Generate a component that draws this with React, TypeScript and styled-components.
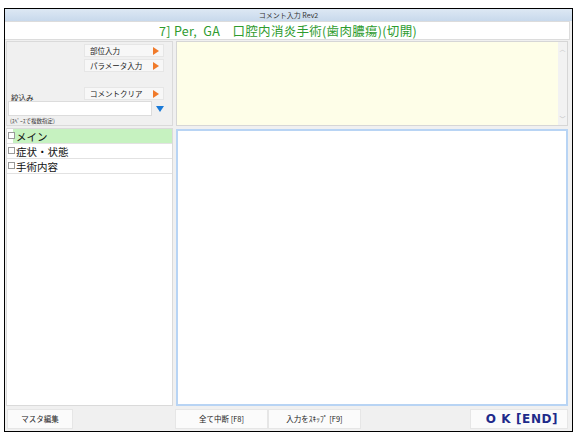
import React from 'react'
import styled, { createGlobalStyle } from 'styled-components'

const Global = createGlobalStyle`
	html, body {
		margin: 0;
		padding: 0;
		background: #ffffff;
		font-family: 'Noto Sans CJK JP', 'Noto Sans', sans-serif;
	}
`

const Page = styled.div`
	width: 578px;
	height: 437px;
	padding: 8px 5px 5px 4px;
	box-sizing: border-box;
`

const Frame = styled.div`
	width: 569px;
	height: 424px;
	box-sizing: border-box;
	border: 1px solid #000;
	background: #f0f0f0;
	display: flex;
	flex-direction: column;
`

const TitleBar = styled.div`
	height: 12px;
	background: linear-gradient(#dde8f4, #c8d9ec);
	font-size: 7px;
	line-height: 12px;
	text-align: center;
	color: #333;
`

const Header = styled.div`
	height: 17px;
	margin: 0 2px 0 0;
	background: #fff;
	border: 1px solid #dcdcdc;
	border-left: none;
	color: #2e9b2e;
	font-size: 12.5px;
	line-height: 17px;
	text-align: center;
	padding-left: 2px;
	letter-spacing: 0.3px;
`

const Body = styled.div`
	flex: 1;
	display: flex;
	gap: 3px;
	padding: 1px 4px 0 1px;
	min-height: 0;
`

const LeftCol = styled.div`
	width: 167px;
	display: flex;
	flex-direction: column;
	gap: 2px;
`

const RightCol = styled.div`
	flex: 1;
	display: flex;
	flex-direction: column;
	gap: 3px;
`

const FilterPanel = styled.div`
	height: 85px;
	box-sizing: border-box;
	border: 1px solid #dadada;
	display: flex;
	flex-direction: column;
	padding: 2px 0 0 0;
`

const ButtonStack = styled.div`
	display: flex;
	flex-direction: column;
	align-items: flex-end;
	gap: 2px;
	padding-right: 8px;
`

const MenuButton = styled.div`
	width: 80px;
	height: 13px;
	background: #f7f7f7;
	border: 1px solid #e6e6e6;
	box-sizing: border-box;
	display: flex;
	align-items: center;
	justify-content: space-between;
	padding: 0 4px 0 5px;
	font-size: 7.5px;
	color: #222;
`

const Arrow = styled.span`
	width: 0;
	height: 0;
	border-top: 4px solid transparent;
	border-bottom: 4px solid transparent;
	border-left: 6px solid #f07a2a;
`

const FilterRow = styled.div`
	display: flex;
	justify-content: space-between;
	align-items: flex-end;
	padding: 0 8px 0 4px;
	margin-top: 15px;
`

const Label = styled.span`
	font-size: 7.5px;
	color: #222;
	margin-bottom: -3px;
`

const InputRow = styled.div`
	display: flex;
	align-items: center;
	gap: 4px;
	padding: 1px 0 0 1px;
`

const TextInput = styled.div`
	width: 144px;
	height: 15px;
	background: #fff;
	border: 1px solid #dcdcdc;
	box-sizing: border-box;
`

const DownArrow = styled.span`
	width: 0;
	height: 0;
	border-left: 4px solid transparent;
	border-right: 4px solid transparent;
	border-top: 6px solid #1a7ad8;
`

const Hint = styled.div`
	font-size: 5.5px;
	color: #333;
	padding: 1px 0 0 3px;
`

const List = styled.div`
	flex: 1;
	background: #fff;
	border: 1px solid #dadada;
	box-sizing: border-box;
`

const ListItem = styled.div<{ $active?: boolean }>`
	height: 14px;
	display: flex;
	align-items: center;
	border-bottom: 1px solid #e2e2e2;
	background: ${p => (p.$active ? 'linear-gradient(90deg, #fff 6px, #c6f2c0 6px)' : '#fff')};
	font-size: 10.5px;
	color: #111;
	padding-left: 1px;
`

const Check = styled.span`
	width: 5px;
	height: 5px;
	border: 1px solid #999;
	margin-right: 1px;
	margin-top: -2px;
	background: #fff;
`

const NoteArea = styled.div`
	height: 85px;
	box-sizing: border-box;
	background: #fefee8;
	border: 1px solid #d6d6d6;
	display: flex;
	justify-content: flex-end;
`

const ScrollBar = styled.div`
	width: 9px;
	background: #f2f2f2;
	display: flex;
	flex-direction: column;
	justify-content: space-between;
	align-items: center;
	color: #c0c0c0;
	font-size: 6px;
	padding: 2px 0;
`

const EditArea = styled.div`
	flex: 1;
	background: #fff;
	border: 2px solid #b8d4f4;
	box-sizing: border-box;
`

const Footer = styled.div`
	height: 25px;
	display: flex;
	align-items: center;
	padding: 0 4px 0 2px;
`

const FooterButton = styled.div<{ $w: number }>`
	width: ${p => p.$w}px;
	height: 20px;
	background: #fbfbfb;
	border: 1px solid #e6e6e6;
	box-sizing: border-box;
	display: flex;
	align-items: center;
	justify-content: center;
	font-size: 7.5px;
	color: #222;
`

const OkButton = styled(FooterButton)`
	margin-left: auto;
	font-family: 'DejaVu Sans', sans-serif;
	font-weight: bold;
	font-size: 12px;
	color: #1e2a8a;
	letter-spacing: 0.6px;
	padding-left: 6px;
`

const Spacer = styled.div<{ $w: number }>`
	width: ${p => p.$w}px;
`

export default function App() {
	return (
		<Page>
			<Global />
			<Frame>
				<TitleBar>コメント入力 Rev2</TitleBar>
				<Header>7] Per,&nbsp;&nbsp;GA&nbsp;&nbsp;&nbsp;&nbsp;口腔内消炎手術(歯肉膿瘍)(切開)</Header>
				<Body>
					<LeftCol>
						<FilterPanel>
							<ButtonStack>
								<MenuButton>
									部位入力
									<Arrow />
								</MenuButton>
								<MenuButton>
									パラメータ入力
									<Arrow />
								</MenuButton>
							</ButtonStack>
							<FilterRow>
								<Label>絞込み</Label>
								<MenuButton>
									コメントクリア
									<Arrow />
								</MenuButton>
							</FilterRow>
							<InputRow>
								<TextInput />
								<DownArrow />
							</InputRow>
							<Hint>(ｽﾍﾟｰｽで複数指定)</Hint>
						</FilterPanel>
						<List>
							<ListItem $active>
								<Check />
								メイン
							</ListItem>
							<ListItem>
								<Check />
								症状・状態
							</ListItem>
							<ListItem>
								<Check />
								手術内容
							</ListItem>
						</List>
					</LeftCol>
					<RightCol>
						<NoteArea>
							<ScrollBar>
								<span>︿</span>
								<span>﹀</span>
							</ScrollBar>
						</NoteArea>
						<EditArea />
					</RightCol>
				</Body>
				<Footer>
					<FooterButton $w={66}>マスタ編集</FooterButton>
					<Spacer $w={102} />
					<FooterButton $w={93}>全て中断 [F8]</FooterButton>
					<FooterButton $w={93}>入力をｽｷｯﾌﾟ [F9]</FooterButton>
					<OkButton $w={98}>O K [END]</OkButton>
				</Footer>
			</Frame>
		</Page>
	)
}
